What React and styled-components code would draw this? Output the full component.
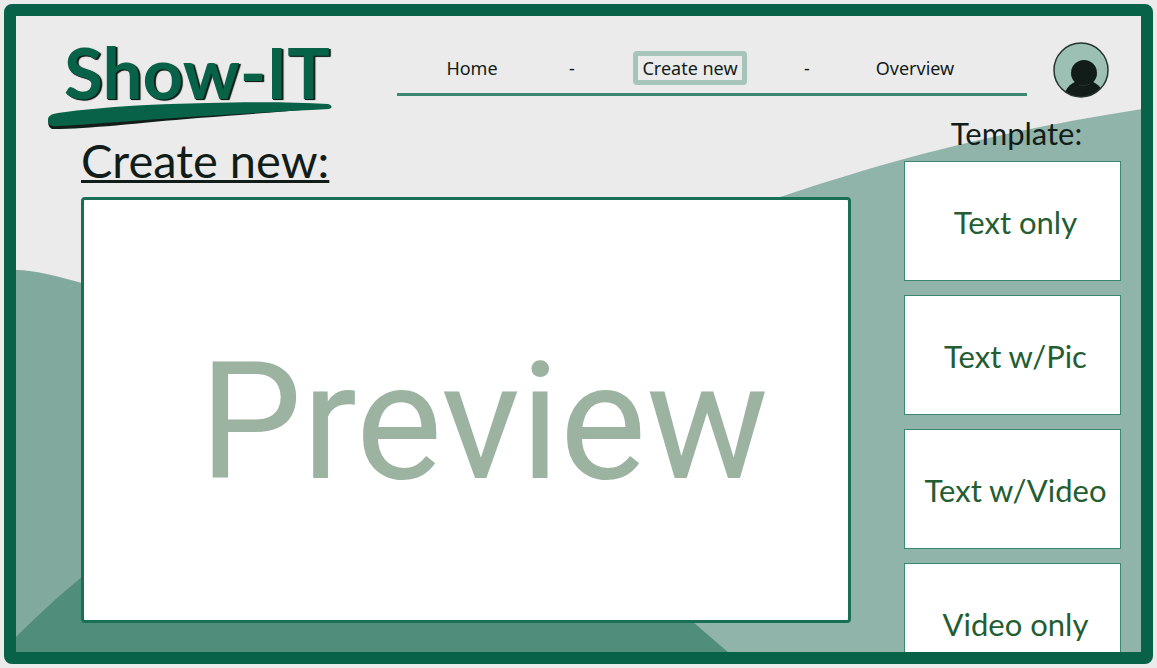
import React from "react";
import styled, { createGlobalStyle } from "styled-components";

const humanist = '"Gill Sans MT", Lato, "Open Sans", sans-serif';
const interfaceFont = '"Noto Sans", "Open Sans", sans-serif';
const displayFont = 'Roboto, "Noto Sans", sans-serif';

const GlobalStyle = createGlobalStyle`
  *, *::before, *::after { box-sizing: border-box; }
  body {
    margin: 0;
    background: #ebebeb;
    color: #121c18;
    font-family: ${humanist};
  }
`;

const Page = styled.div`
  height: 100vh;
  padding: 4px;
  display: flex;
`;

const Frame = styled.div`
  position: relative;
  isolation: isolate;
  flex: 1;
  min-width: 0;
  display: flex;
  flex-direction: column;
  overflow: hidden;
  border: 12px solid #076247;
  border-radius: 8px;
`;

const Hills = styled.svg`
  position: absolute;
  inset: 0;
  z-index: -1;
  width: 100%;
  height: 100%;
`;

const Header = styled.header`
  display: grid;
  grid-template-columns: 284px minmax(0, 1fr) 56px;
  align-items: start;
  padding: 26px 32px 0 32px;
`;

const Logo = styled.a`
  display: block;
  height: 88px;
  color: #076247;
  text-decoration: none;
`;

const LogoText = styled.span`
  display: block;
  padding-left: 16px;
  font-size: 71px;
  font-weight: 700;
  line-height: 60px;
  white-space: nowrap;
  text-shadow: 1px 1px 0 #121c18, 2px 1px 1px #121c18;
`;

const Swoosh = styled.svg`
  display: block;
  width: 284px;
  height: 28px;
`;

const Nav = styled.nav`
  display: grid;
  grid-template-columns: 100fr 100fr 136fr 98fr 118fr;
  place-items: center;
  margin: 9px 26px 0 65px;
  padding: 0 53px 8px 25px;
  border-bottom: 3px solid #3b8870;
  font-family: ${interfaceFont};
  font-size: 18px;
  line-height: 24px;
`;

const NavLink = styled.a`
  padding: 0 4px;
  border: 5px solid ${(p) => (p.$active ? "#a7c4bb" : "transparent")};
  border-radius: 4px;
  color: inherit;
  text-decoration: none;
  white-space: nowrap;
`;

const ProfileButton = styled.button`
  width: 56px;
  height: 56px;
  padding: 0;
  border: 0;
  border-radius: 50%;
  background: none;
  cursor: pointer;

  svg { display: block; }
`;

const Content = styled.div`
  flex: 1;
  min-height: 0;
  display: grid;
  grid-template-columns: minmax(0, 1fr) 217px;
  column-gap: 53px;
  padding: 0 20px 0 65px;
`;

const Editor = styled.main`
  display: flex;
  flex-direction: column;
  min-height: 0;
  padding: 0 0 29px;
`;

const Title = styled.h1`
  margin: 0 0 7px;
  font-size: 47px;
  font-weight: 400;
  line-height: 60px;
  text-decoration: underline;
  text-decoration-thickness: 3px;
  text-underline-offset: 2px;
  text-decoration-skip-ink: none;
`;

const Preview = styled.section`
  flex: 1;
  display: flex;
  align-items: center;
  justify-content: center;
  border: 3px solid #1a7054;
  border-radius: 4px;
  background: #fff;
  color: #9bb3a0;
  font-family: ${displayFont};
  font-size: 163px;
  line-height: 1;
  padding: 24px 0 0 36px;
`;

const Templates = styled.aside`
  margin-top: -15px;
  min-height: 0;
`;

const TemplatesTitle = styled.h2`
  margin: 0;
  padding-left: 8px;
  font-size: 31px;
  font-weight: 400;
  line-height: 36px;
  text-align: center;
`;

const TemplateList = styled.div`
  display: flex;
  flex-direction: column;
  gap: 14px;
  padding-top: 10px;
`;

const TemplateCard = styled.button`
  flex: none;
  height: 120px;
  padding: 2px 0 0 6px;
  border: 1px solid #3b8870;
  background: #fff;
  color: #235d31;
  font-family: inherit;
  font-size: 31px;
  line-height: 36px;
  cursor: pointer;
`;

const templates = ["Text only", "Text w/Pic", "Text w/Video", "Video only"];

export default function App() {
  return (
    <Page>
      <GlobalStyle />
      <Frame>
        <Hills viewBox="16 16 1125 636" preserveAspectRatio="none" aria-hidden="true">
          <path d="M500 330 C620 255 700 222 780 197 C850 174 960 137 1142 109 V653 H500Z" fill="#91b4aa" />
          <path d="M16 270 C35 270 60 277 82 283 C300 345 560 500 640 653 H16Z" fill="#81a99d" />
          <path d="M16 637 C40 613 60 595 82 577 C300 400 520 470 693 622 L729 653 H16Z" fill="#508d7a" />
        </Hills>

        <Header>
          <Logo href="#" aria-label="Show-IT">
            <LogoText>Show-IT</LogoText>
            <Swoosh viewBox="0 0 284 28" aria-hidden="true">
              <path d="M1 16 C-1 22 1 27 6 27 C40 27 90 21 150 16 C205 12 245 9 278 6 L270 3Z" fill="#121c18" />
              <path d="M0 18 C0 14 3 12 10 11 C60 4 110 2 160 1 C205 0 245 0 280 2 C284 3 285 6 281 7 C240 9 190 12 140 15 C90 18 50 22 10 24 C3 25 0 23 0 18Z" fill="#076247" />
            </Swoosh>
          </Logo>

          <Nav>
            <NavLink href="#home">Home</NavLink>
            <span>-</span>
            <NavLink href="#create" $active aria-current="page">Create new</NavLink>
            <span>-</span>
            <NavLink href="#overview">Overview</NavLink>
          </Nav>

          <ProfileButton type="button" aria-label="Profile">
            <svg width="56" height="56" viewBox="0 0 56 56">
              <defs>
                <clipPath id="disc"><circle cx="28" cy="28" r="27" /></clipPath>
              </defs>
              <circle cx="28" cy="28" r="27" fill="#9dc0b5" />
              <g clipPath="url(#disc)">
                <ellipse cx="31" cy="56" rx="20" ry="18" fill="#121c18" />
                <circle cx="31" cy="31" r="13" fill="#121c18" />
                <path d="M26 43 Q31 45 37 42" fill="none" stroke="#26332e" strokeWidth="1" />
              </g>
              <circle cx="28" cy="28" r="27" fill="none" stroke="#26332e" strokeWidth="1.500" />
            </svg>
          </ProfileButton>
        </Header>

        <Content>
          <Editor>
            <Title>Create new:</Title>
            <Preview>Preview</Preview>
          </Editor>
          <Templates>
            <TemplatesTitle>Template:</TemplatesTitle>
            <TemplateList>
              {templates.map((name) => (
                <TemplateCard type="button" key={name}>{name}</TemplateCard>
              ))}
            </TemplateList>
          </Templates>
        </Content>
      </Frame>
    </Page>
  );
}
